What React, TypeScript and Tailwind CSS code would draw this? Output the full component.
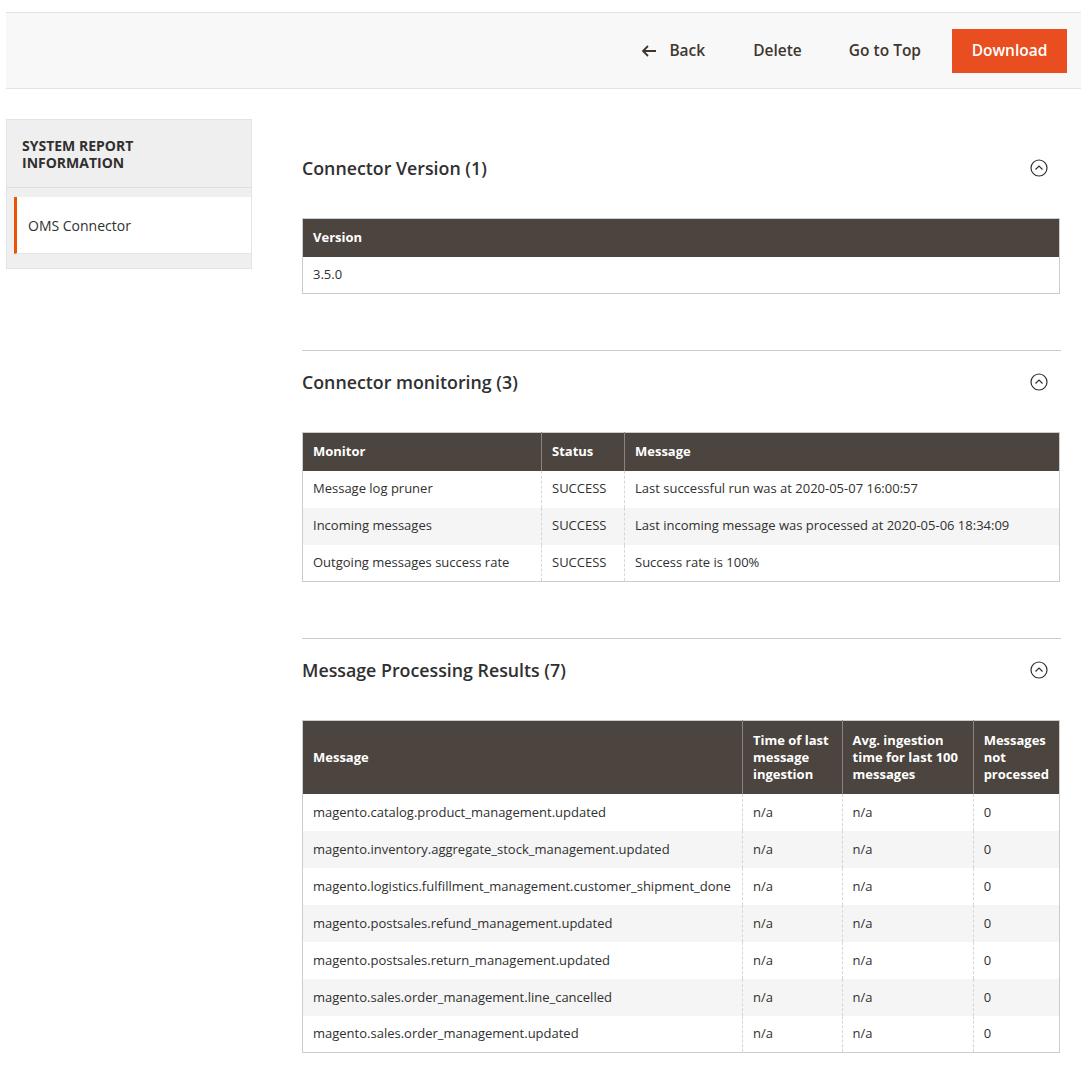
import React from "react";

const Icon = () => (
  <svg width="18" height="18" viewBox="0 0 18 18" fill="none" stroke="#303030" strokeWidth="1.2">
    <circle cx="9" cy="9" r="8" />
    <path d="M5.5 10.5 L9 7 L12.5 10.5" />
  </svg>
);

const th = "bg-[#4c443e] text-white font-bold text-[13px] px-[10px] text-left align-middle border-l border-[#8a837f] first:border-l-0";
const td = "px-[10px] text-[13px] text-[#303030] border-l border-dashed border-[#d6d6d6] first:border-l-0 h-[37px]";

function Section({ title, first, children }: { title: string; first?: boolean; children: React.ReactNode }) {
  return (
    <div className={first ? "" : "border-t border-[#cccccc] mt-[56px]"}>
      <div className={`flex items-center justify-between ${first ? "pt-[37px]" : "pt-[19px]"}`}>
        <div className="text-[17.8px] text-[#303030] font-semibold leading-[24px]">{title}</div>
        <div className="mr-[13px]"><Icon /></div>
      </div>
      <div className="mt-[38px]">{children}</div>
    </div>
  );
}

export default function App() {
  const msgs = [
    "magento.catalog.product_management.updated",
    "magento.inventory.aggregate_stock_management.updated",
    "magento.logistics.fulfillment_management.customer_shipment_done",
    "magento.postsales.refund_management.updated",
    "magento.postsales.return_management.updated",
    "magento.sales.order_management.line_cancelled",
    "magento.sales.order_management.updated",
  ];
  const mon = [
    ["Message log pruner", "SUCCESS", "Last successful run was at 2020-05-07 16:00:57"],
    ["Incoming messages", "SUCCESS", "Last incoming message was processed at 2020-05-06 18:34:09"],
    ["Outgoing messages success rate", "SUCCESS", "Success rate is 100%"],
  ];
  return (
    <div className="bg-white min-h-[1082px] pt-[12px] px-[6px] text-[#303030]" style={{ fontFamily: '"Open Sans", sans-serif' }}>
      <div className="h-[77px] bg-[#f8f8f8] border-y border-[#e3e3e3] w-[1075px] flex items-center justify-end pr-[14px]">
        <button className="flex items-center gap-[12px] text-[15.5px] font-semibold text-[#41362f] mr-[48px]">
          <svg width="16" height="14" viewBox="0 0 16 14" fill="none" stroke="#41362f" strokeWidth="1.8"><path d="M15 7H2M7 2L2 7l5 5" /></svg>
          Back
        </button>
        <button className="text-[15.5px] font-semibold text-[#41362f] mr-[47px]">Delete</button>
        <button className="text-[15.5px] font-semibold text-[#41362f] mr-[31px]">Go to Top</button>
        <button className="bg-[#e84e1f] text-white text-[15.5px] font-semibold w-[115px] h-[44px]">Download</button>
      </div>
      <div className="flex mt-[30px]">
        <div className="w-[246px] shrink-0 bg-[#efefef] border border-[#e3e3e3] h-[150px] self-start">
          <div className="h-[68px] px-[15px] pt-[17px] text-[14px] font-bold leading-[17px] text-[#303030] border-b border-[#dedede]">
            SYSTEM REPORT<br />INFORMATION
          </div>
          <div className="mt-[9px] bg-white h-[57px] border-l-[3px] border-[#eb5202] ml-[7px] flex items-center pl-[11px] text-[14px] border-b border-b-[#e3e3e3]">
            OMS Connector
          </div>
        </div>
        <div className="ml-[50px] w-[759px]">
          <Section title="Connector Version (1)" first>
            <table className="w-[758px] border border-[#cccccc] border-collapse">
              <thead><tr className="h-[38px]"><th className={th}>Version</th></tr></thead>
              <tbody><tr><td className={td}>3.5.0</td></tr></tbody>
            </table>
          </Section>
          <Section title="Connector monitoring (3)">
            <table className="w-[758px] border border-[#cccccc] border-collapse">
              <thead><tr className="h-[38px]">
                <th className={th + " w-[239px]"}>Monitor</th>
                <th className={th + " w-[83px]"}>Status</th>
                <th className={th}>Message</th>
              </tr></thead>
              <tbody>
                {mon.map((r, i) => (
                  <tr key={i} className={i % 2 ? "bg-[#f5f5f5]" : "bg-white"}>
                    {r.map((c, j) => <td key={j} className={td}>{c}</td>)}
                  </tr>
                ))}
              </tbody>
            </table>
          </Section>
          <Section title="Message Processing Results (7)">
            <table className="w-[758px] border border-[#cccccc] border-collapse leading-[17px]">
              <thead><tr className="h-[73px]">
                <th className={th + " w-[440px]"}>Message</th>
                <th className={th + " w-[100px]"}>Time of last message ingestion</th>
                <th className={th + " w-[132px]"}>Avg. ingestion time for last 100 messages</th>
                <th className={th}>Messages not processed</th>
              </tr></thead>
              <tbody>
                {msgs.map((m, i) => (
                  <tr key={i} className={i % 2 ? "bg-[#f5f5f5]" : "bg-white"}>
                    <td className={td}>{m}</td>
                    <td className={td}>n/a</td>
                    <td className={td}>n/a</td>
                    <td className={td}>0</td>
                  </tr>
                ))}
              </tbody>
            </table>
          </Section>
        </div>
      </div>
    </div>
  );
}
